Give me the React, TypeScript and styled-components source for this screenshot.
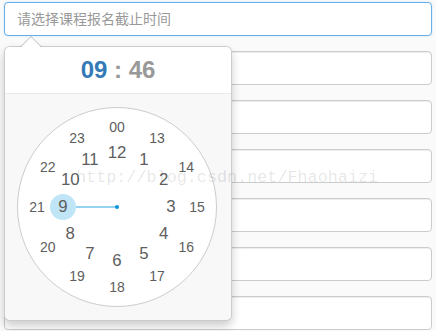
import React from 'react';
import styled, { createGlobalStyle } from 'styled-components';

const Global = createGlobalStyle`
  * { box-sizing: border-box; }
  html, body { margin: 0; padding: 0; background: #fafafa; }
  body {
    font-family: "Liberation Sans", Arial, "Noto Sans CJK SC", sans-serif;
    font-size: 14px;
    color: #333;
    overflow: hidden;
  }
`;

const Page = styled.div`
  position: relative;
  width: 436px;
  height: 331px;
  padding: 2px 4px 0;
  display: flex;
  flex-direction: column;
  gap: 15px;
  overflow: hidden;
`;

const Field = styled.div`
  position: relative;
`;

const Input = styled.input<{ $focused?: boolean }>`
  display: block;
  width: 100%;
  height: 34px;
  padding: 6px 12px;
  font-family: "Liberation Sans", Arial, "Noto Sans CJK SC", sans-serif;
  font-size: 14px;
  line-height: 20px;
  color: #555;
  background: #fff;
  border: 1px solid ${(p) => (p.$focused ? '#66afe9' : '#ccc')};
  border-radius: 4px;
  outline: none;
  box-shadow: ${(p) =>
    p.$focused ? '0 0 2px rgba(102,175,233,.35)' : 'inset 0 1px 1px rgba(0,0,0,.075)'};
  &::placeholder {
    color: #999;
  }
`;

const Popover = styled.div`
  position: absolute;
  top: calc(100% + 10px);
  left: 0;
  z-index: 10;
  width: 228px;
  background: #fff;
  border: 1px solid rgba(0, 0, 0, 0.2);
  border-radius: 6px;
  box-shadow: 0 5px 10px rgba(0, 0, 0, 0.2);
`;

const Arrow = styled.div`
  position: absolute;
  top: -11px;
  left: 15px;
  width: 0;
  height: 0;
  border: 11px solid transparent;
  border-top-width: 0;
  border-bottom-color: rgba(0, 0, 0, 0.25);
  &::after {
    content: '';
    position: absolute;
    top: 1px;
    left: -10px;
    border: 10px solid transparent;
    border-top-width: 0;
    border-bottom-color: #fff;
  }
`;

const Title = styled.div`
  padding: 8px 14px;
  font-family: "Liberation Sans", Arial, sans-serif;
  font-size: 24px;
  font-weight: bold;
  line-height: 30px;
  text-align: center;
  color: #999;
  background: #fff;
  border-bottom: 1px solid #ebebeb;
  border-radius: 5px 5px 0 0;
`;

const Hours = styled.span`
  color: #337ab7;
`;

const Content = styled.div`
  padding: 13px 12px;
  background: #f8f8f8;
  border-radius: 0 0 5px 5px;
`;

const Plate = styled.div`
  position: relative;
  width: 200px;
  height: 200px;
  background: #fff;
  border: 1px solid #ccc;
  border-radius: 50%;
`;

const Dial = styled.div`
  position: absolute;
  left: -1px;
  top: -1px;
  width: 200px;
  height: 200px;
`;

const HandSvg = styled.svg`
  position: absolute;
  left: 0;
  top: 0;
`;

const Tick = styled.div<{ $inner: boolean }>`
  position: absolute;
  width: 26px;
  height: 26px;
  line-height: 26px;
  text-align: center;
  border-radius: 50%;
  color: #5e5e5e;
  font-family: "Liberation Sans", Arial, sans-serif;
  font-size: ${(p) => (p.$inner ? '16.8px' : '14px')};
`;

const Watermark = styled.div`
  position: absolute;
  left: 76px;
  top: 168px;
  z-index: 20;
  font-family: "Liberation Mono", "Courier New", monospace;
  font-size: 16.8px;
  line-height: 20px;
  color: rgba(0, 0, 0, 0.11);
  white-space: nowrap;
  pointer-events: none;
`;

const DIAL_R = 100;
const OUTER_R = 80;
const INNER_R = 54;
const TICK_R = 13;

const ticks = Array.from({ length: 24 }, (_, i) => {
  const rad = (i / 6) * Math.PI;
  const inner = i > 0 && i < 13;
  const r = inner ? INNER_R : OUTER_R;
  return {
    label: i === 0 ? '00' : String(i),
    inner,
    left: DIAL_R + Math.sin(rad) * r - TICK_R,
    top: DIAL_R - Math.cos(rad) * r - TICK_R,
  };
});

const selectedHour = 9;
const handRad = (selectedHour / 6) * Math.PI;
const handR = INNER_R;

export default function App() {
  return (
    <>
      <Global />
      <Page>
        <Field>
          <Input $focused placeholder="请选择课程报名截止时间" />
          <Popover>
            <Arrow />
            <Title>
              <Hours>09</Hours> : <span>46</span>
            </Title>
            <Content>
              <Plate>
                <Dial>
                  <HandSvg width={200} height={200} viewBox="0 0 200 200">
                    <g transform="translate(100,100)">
                      <line
                        x1={0}
                        y1={0}
                        x2={Math.sin(handRad) * (handR - TICK_R)}
                        y2={-Math.cos(handRad) * (handR - TICK_R)}
                        stroke="#0095dd"
                        strokeOpacity={0.55}
                        strokeWidth={1.5}
                      />
                      <circle
                        cx={Math.sin(handRad) * handR}
                        cy={-Math.cos(handRad) * handR}
                        r={TICK_R}
                        fill="#c0e5f7"
                      />
                      <circle cx={0} cy={0} r={2} fill="#0095dd" />
                    </g>
                  </HandSvg>
                  {ticks.map((t) => (
                    <Tick
                      key={t.label}
                      $inner={t.inner}
                      style={{ left: t.left, top: t.top }}
                    >
                      {t.label}
                    </Tick>
                  ))}
                </Dial>
              </Plate>
            </Content>
          </Popover>
        </Field>
        <Input />
        <Input />
        <Input />
        <Input />
        <Input />
        <Input />
        <Watermark>http://blog.csdn.net/Fhaohaizi</Watermark>
      </Page>
    </>
  );
}
